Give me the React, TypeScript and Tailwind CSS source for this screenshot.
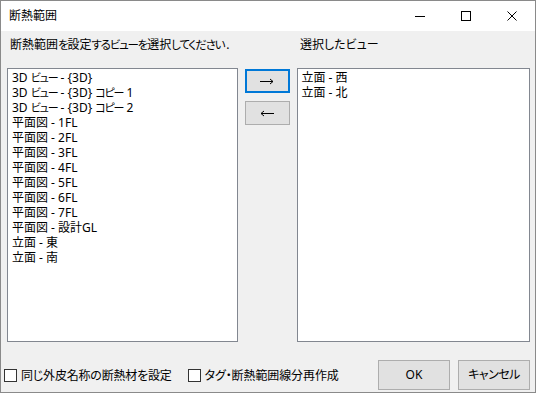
import React from "react";

const leftItems = [
  "3D ビュー - {3D}",
  "3D ビュー - {3D} コピー 1",
  "3D ビュー - {3D} コピー 2",
  "平面図 - 1FL",
  "平面図 - 2FL",
  "平面図 - 3FL",
  "平面図 - 4FL",
  "平面図 - 5FL",
  "平面図 - 6FL",
  "平面図 - 7FL",
  "平面図 - 設計GL",
  "立面 - 東",
  "立面 - 南",
];

const rightItems = ["立面 - 西", "立面 - 北"];

const font = { fontFamily: '"Noto Sans", "Noto Sans CJK JP", sans-serif' };

// kana runs are narrower in the original UI font
function Ja({ text, kana }: { text: string; kana: string }) {
  const parts = text.split(/([\u3040-\u30ff]+)/);
  return (
    <>
      {parts.map((p, i) =>
        /[\u3040-\u30ff]/.test(p) ? (
          <span key={i} className={kana}>
            {p}
          </span>
        ) : (
          <React.Fragment key={i}>{p}</React.Fragment>
        )
      )}
    </>
  );
}

function ListBox({ items, width }: { items: string[]; width: string }) {
  return (
    <div className={`${width} h-[274px] border border-[#828790] bg-white pl-[4px] pt-[1px]`}>
      {items.map((item, idx) => (
        <div key={idx} className="text-[12px] leading-[15px] text-black whitespace-nowrap">
          <Ja text={item} kana="text-[11px] tracking-[-1.2px]" />
        </div>
      ))}
    </div>
  );
}

function CheckBox({ label, tracking }: { label: string; tracking: string }) {
  return (
    <label className="flex items-center gap-[4px]">
      <span className="w-[13px] h-[13px] border border-[#333333] bg-white" />
      <span className={`text-[12px] leading-[15px] whitespace-nowrap ${tracking}`}>{label}</span>
    </label>
  );
}

function Arrow({ left }: { left?: boolean }) {
  return (
    <svg width="14" height="7" viewBox="0 0 14 7" className={left ? "-scale-x-100" : ""}>
      <path d="M0 3.5 H13 M10 1 L13 3.5 L10 6" stroke="#000" strokeWidth="1" fill="none" />
    </svg>
  );
}

export default function App() {
  return (
    <div
      className="w-[536px] h-[393px] border border-[#8a8a8a] bg-[#f0f0f0] flex flex-col text-black overflow-hidden [font-feature-settings:'palt']"
      style={font}
    >
      {/* title bar */}
      <div className="h-[30px] bg-white flex items-center shrink-0">
        <div className="pl-[8px] text-[12px] flex-1">断熱範囲</div>
        <div className="w-[46px] h-full flex items-center justify-center">
          <div className="w-[10px] h-px bg-black" />
        </div>
        <div className="w-[46px] h-full flex items-center justify-center">
          <div className="w-[10px] h-[10px] border border-black" />
        </div>
        <div className="w-[46px] h-full flex items-center justify-center">
          <svg width="10" height="10" viewBox="0 0 10 10">
            <path d="M0.5 0.5 L9.5 9.5 M9.5 0.5 L0.5 9.5" stroke="#000" strokeWidth="1" />
          </svg>
        </div>
      </div>

      <div className="flex-1 flex flex-col pl-[6px] pr-[5px]">
        {/* labels */}
        <div className="flex mt-[6px] h-[15px] items-center">
          <div className="w-[292px] pl-[3px] text-[12px] leading-[15px] whitespace-nowrap">
            <Ja text="断熱範囲を設定するビューを選択してください" kana="text-[11.5px] tracking-[-1.2px]" />
            <span className="pl-[2px]">.</span>
          </div>
          <div className="text-[12px] leading-[15px] whitespace-nowrap pl-[1px]">選択したビュー</div>
        </div>

        {/* lists */}
        <div className="flex mt-[16px] gap-[7px]">
          <ListBox items={leftItems} width="w-[231px]" />
          <div className="flex flex-col gap-[8px] pt-[1px]">
            <button className="w-[45px] h-[24px] border-2 border-[#0078d7] bg-[#e1e1e1] flex items-center justify-center">
              <Arrow />
            </button>
            <button className="w-[45px] h-[24px] border border-[#adadad] bg-[#e1e1e1] flex items-center justify-center">
              <Arrow left />
            </button>
          </div>
          <ListBox items={rightItems} width="w-[234px]" />
        </div>

        {/* bottom row */}
        <div className="flex items-center mt-[18px] -ml-[3px]">
          <CheckBox label="同じ外皮名称の断熱材を設定" tracking="tracking-[-0.2px]" />
          <div className="ml-[16px]">
            <CheckBox label="タグ・断熱範囲線分再作成" tracking="tracking-[-0.1px]" />
          </div>
          <div className="ml-auto flex gap-[8px]">
            <button className="w-[72px] h-[30px] border border-[#adadad] bg-[#e1e1e1] text-[12px]">OK</button>
            <button className="w-[72px] h-[30px] border border-[#adadad] bg-[#e1e1e1] text-[12px] tracking-[-0.5px]">
              キャンセル
            </button>
          </div>
        </div>
      </div>
    </div>
  );
}
